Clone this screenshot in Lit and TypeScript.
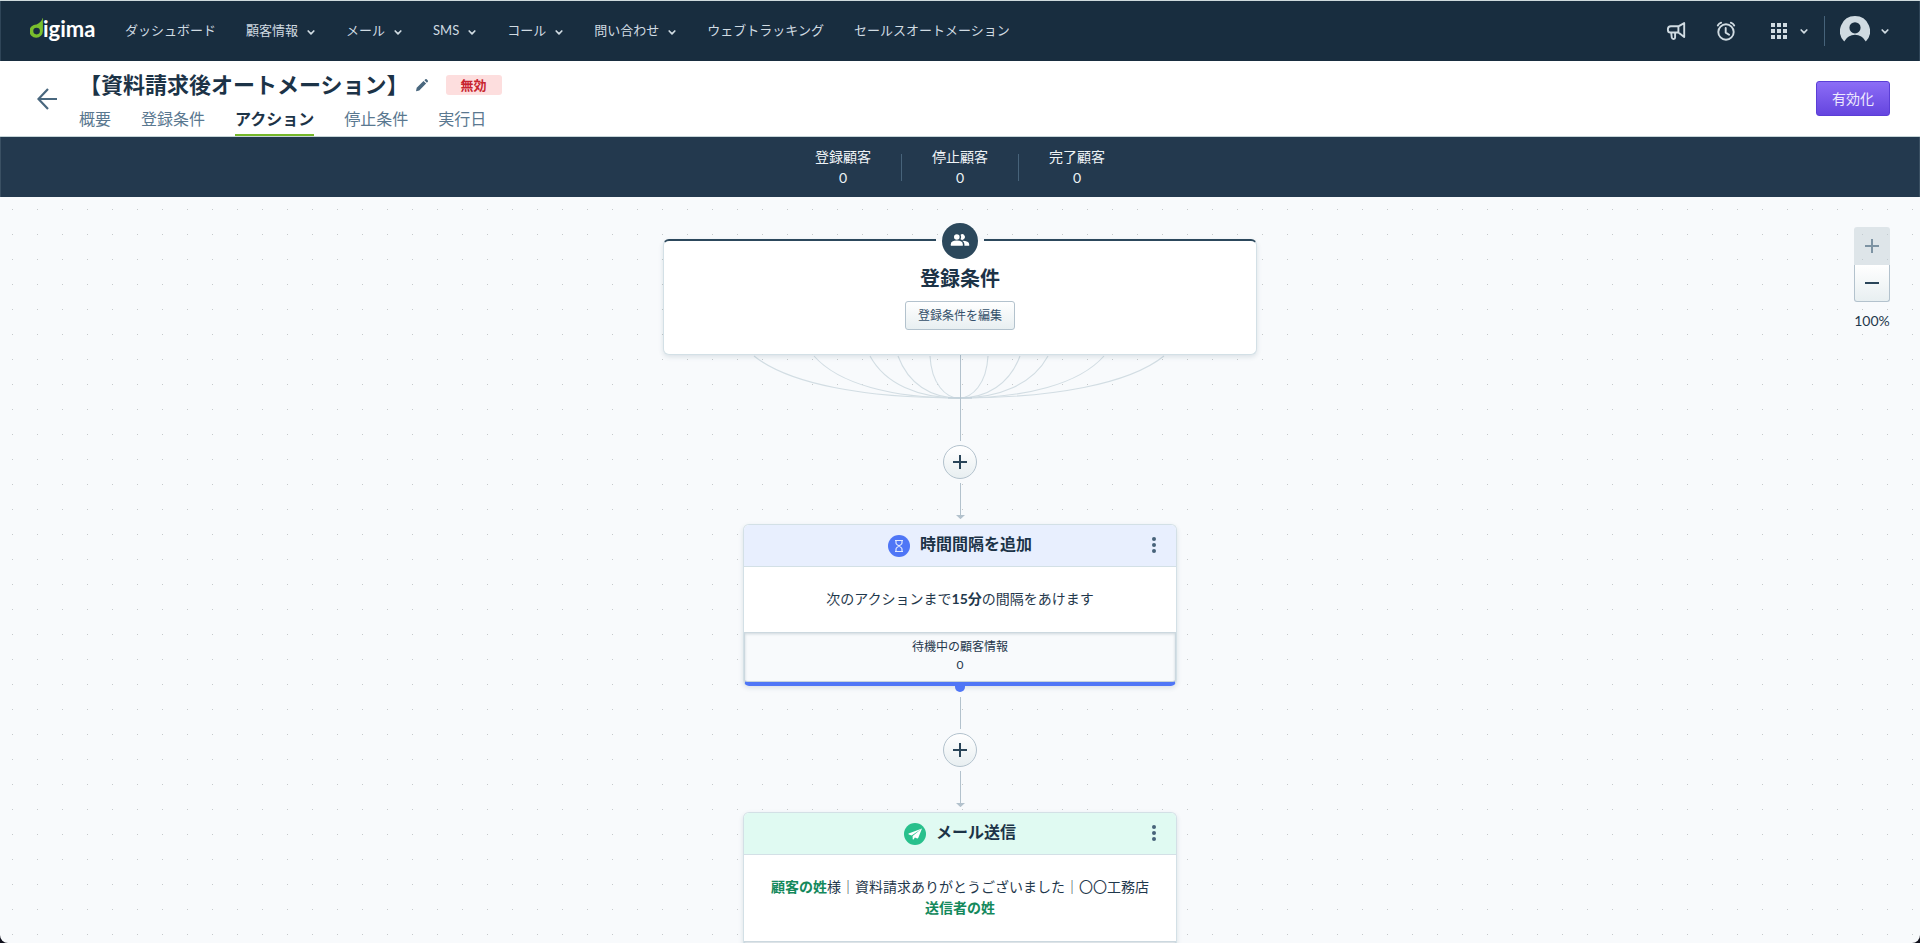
import { LitElement, html, svg, css, nothing } from "lit";
import { customElement, property } from "lit/decorators.js";

const chevron = html`<svg class="chevron" width="10" height="10" viewBox="0 0 10 10" fill="none" aria-hidden="true">
  <path d="M2.200 4L5 6.800 7.800 4" stroke="currentColor" stroke-width="1.7" stroke-linecap="round" stroke-linejoin="round" />
</svg>`;

const plus = html`<svg width="14" height="14" viewBox="0 0 14 14" aria-hidden="true">
  <path d="M0 6h14v2H0zM6 0h2v14H6z" fill="currentColor" />
</svg>`;

const base = css`
  * {
    box-sizing: border-box;
  }
  svg {
    display: block;
    flex: none;
  }
  button {
    font: inherit;
    color: inherit;
    margin: 0;
    padding: 0;
    border: 0;
    background: none;
    cursor: pointer;
  }
  a {
    color: inherit;
    text-decoration: none;
  }
`;

@customElement("top-nav")
class TopNav extends LitElement {
  static styles = [
    base,
    css`
      :host {
        display: block;
      }
      .bar {
        display: flex;
        align-items: center;
        height: 61px;
        padding: 0 30px;
        border-top: 1px solid #cfdadd;
        background: #182d3f;
        color: #d0dbe2;
        box-shadow: inset 1px 0 #2f4558, inset -1px 0 #2f4558;
      }
      .logo {
        margin-right: 27px;
      }
      .wordmark {
        font: bold 22px Lato, sans-serif;
        fill: #fff;
      }
      nav {
        display: flex;
        flex: 1;
        gap: 30px;
        font-size: 13px;
        line-height: 20px;
        white-space: nowrap;
        padding-bottom: 2px;
      }
      .item {
        display: flex;
        align-items: center;
        gap: 8px;
      }
      .item .chevron {
        margin-top: 4px;
      }
      .tools {
        display: flex;
        align-items: center;
        gap: 30px;
      }
      .menu {
        display: flex;
        align-items: center;
        gap: 10px;
      }
      .apps {
        margin-left: 3px;
      }
      .account {
        padding-left: 15px;
        margin-left: -15px;
        height: 30px;
        border-left: 1px solid #46637a;
      }
    `,
  ];

  private items: [string, boolean][] = [
    ["ダッシュボード", false],
    ["顧客情報", true],
    ["メール", true],
    ["SMS", true],
    ["コール", true],
    ["問い合わせ", true],
    ["ウェブトラッキング", false],
    ["セールスオートメーション", false],
  ];

  render() {
    return html`<header class="bar">
      <a class="logo" href="#" aria-label="digima">
        <svg width="68" height="30" viewBox="0 0 68 30">
          <path
            d="M12.6 2C12 5 9.6 7 6.6 8.4A6.7 6.7 0 1 0 12.9 15V2zM6.6 11.8a3.3 3.3 0 1 1 0 6.6 3.3 3.3 0 0 1 0-6.6z"
            fill="#79bf2d"
            fill-rule="evenodd"
          />
          <text class="wordmark" x="13" y="21">igima</text>
        </svg>
      </a>
      <nav>
        ${this.items.map(([label, menu]) =>
          menu
            ? html`<button class="item" type="button" aria-haspopup="true">${label}${chevron}</button>`
            : html`<a class="item" href="#">${label}</a>`
        )}
      </nav>
      <div class="tools">
        <button type="button" aria-label="お知らせ">
          <svg width="20" height="20" viewBox="0 0 20 20" fill="none" stroke="currentColor" stroke-width="1.9" stroke-linejoin="round">
            <path d="M12.4 5.3H4.9a3 3 0 0 0-3 3v.6a2.6 2.6 0 0 0 2.6 2.6h7.9zM12.4 5.3l5.8-3.2v14l-5.8-4.6M5.2 11.5l.6 5.1q.3 1.4 1.7 1.4h.2q1.4 0 1.4-1.4v-5" />
          </svg>
        </button>
        <button type="button" aria-label="アラーム">
          <svg width="20" height="20" viewBox="0 0 20 20" fill="none" stroke="currentColor" stroke-width="1.9" stroke-linecap="round" stroke-linejoin="round">
            <circle cx="10" cy="11" r="7.7" />
            <path d="M9.7 7v4.6l3.4 2.2M1.8 4.4q1.200-2 3.400-2.700M18.200 4.400q-1.200-2-3.400-2.700" />
          </svg>
        </button>
        <button class="menu apps" type="button" aria-label="アプリ">
          <svg width="20" height="20" viewBox="0 0 20 20" fill="currentColor">
            ${[2, 8, 14].map((y) => [2, 8, 14].map((x) => svg`<rect x=${x} y=${y} width="4" height="4" />`))}
          </svg>
          ${chevron}
        </button>
        <button class="menu account" type="button" aria-label="アカウント">
          <svg width="30" height="30" viewBox="0 0 30 30" fill="currentColor">
            <path
              d="M15 0a15 15 0 0 0-10.800 25.400Q8 18.800 15 18.800t10.800 6.600A15 15 0 0 0 15 0zM15 6.200a5.600 5.600 0 1 1 0 11.200 5.600 5.600 0 0 1 0-11.200z"
              fill-rule="evenodd"
            />
          </svg>
          ${chevron}
        </button>
      </div>
    </header>`;
  }
}

@customElement("page-head")
class PageHead extends LitElement {
  static styles = [
    base,
    css`
      :host {
        display: block;
      }
      .head {
        display: flex;
        align-items: center;
        height: 76px;
        padding: 0 30px;
        background: #fff;
        border-bottom: 1px solid #c6d5d8;
      }
      .back {
        padding: 0 7px;
        color: #49677e;
      }
      .main {
        flex: 1;
        align-self: stretch;
        display: flex;
        flex-direction: column;
        margin-left: 15px;
      }
      .title {
        display: flex;
        align-items: center;
        height: 46px;
        padding-top: 2px;
      }
      h1 {
        margin: 0 6px 0 0;
        font-size: 22px;
        line-height: 32px;
        font-weight: 700;
        color: #1c3347;
      }
      .edit {
        color: #49677e;
      }
      .badge {
        margin-left: 17px;
        padding: 0 15px;
        border-radius: 3px;
        background: #fddede;
        color: #c8252f;
        font-size: 13px;
        line-height: 20px;
        font-weight: 700;
      }
      .tabs {
        display: flex;
        gap: 30px;
        height: 30px;
        font-size: 16px;
        line-height: 26px;
        color: #5a7890;
      }
      .tab[aria-current] {
        font-weight: 700;
        color: #1c3347;
        border-bottom: 2px solid #76b82a;
      }
      .enable {
        height: 35px;
        padding: 0 15px 2px;
        border: 1px solid #5b3ed6;
        border-radius: 3px;
        background: linear-gradient(#8c6df6, #6545df);
        color: #eeeafd;
        font-size: 14px;
      }
    `,
  ];

  render() {
    return html`<section class="head">
      <button class="back" type="button" aria-label="戻る">
        <svg width="20" height="22" viewBox="0 0 20 22" fill="none" stroke="currentColor" stroke-width="2.200">
          <path d="M20 11H1.500M11 1L1.500 11l9.500 10" />
        </svg>
      </button>
      <div class="main">
        <div class="title">
          <h1>【資料請求後オートメーション】</h1>
          <button class="edit" type="button" aria-label="名前を編集">
            <svg width="14" height="14" viewBox="0 0 14 14" fill="currentColor">
              <path d="M1 13.200l.7-3.400 6.800-6.800 2.600 2.600-6.800 6.900zM9.400 2.200l.9-.9q.7-.6 1.400 0l1.100 1.100q.6.700 0 1.400l-.9.900z" />
            </svg>
          </button>
          <span class="badge">無効</span>
        </div>
        <nav class="tabs">
          <a class="tab" href="#">概要</a>
          <a class="tab" href="#">登録条件</a>
          <a class="tab" href="#" aria-current="page">アクション</a>
          <a class="tab" href="#">停止条件</a>
          <a class="tab" href="#">実行日</a>
        </nav>
      </div>
      <button class="enable" type="button">有効化</button>
    </section>`;
  }
}

@customElement("stats-bar")
class StatsBar extends LitElement {
  static styles = [
    base,
    css`
      :host {
        display: block;
      }
      .stats {
        display: flex;
        justify-content: center;
        align-items: center;
        height: 60px;
        margin: 0;
        background: #23394e;
        color: #eef3f6;
        font-size: 14px;
        line-height: 21px;
        text-align: center;
        box-shadow: inset 1px 0 #3a5063, inset -1px 0 #3a5063;
      }
      .rule {
        width: 1px;
        height: 27px;
        margin: 0 30px;
        background: #47637a;
      }
      dd {
        margin: 0;
      }
    `,
  ];

  render() {
    return html`<dl class="stats">
      ${["登録顧客", "停止顧客", "完了顧客"].map(
        (label, i) => html`${i ? html`<div class="rule"></div>` : nothing}
          <div><dt>${label}</dt><dd>0</dd></div>`
      )}
    </dl>`;
  }
}

@customElement("flow-link")
class FlowLink extends LitElement {
  @property({ type: Boolean }) first = false;

  static styles = [
    base,
    css`
      :host {
        display: flex;
        flex-direction: column;
        align-items: center;
        gap: 4px;
        padding-bottom: 5px;
        color: #b3c2cd;
      }
      :host(:not([first])) {
        padding-top: 11px;
      }
      .add {
        display: grid;
        place-items: center;
        width: 34px;
        height: 34px;
        border: 1px solid #b3c2cd;
        border-radius: 50%;
        background: linear-gradient(#fff, #e8eff1);
        color: #2a4559;
      }
    `,
  ];

  /* Half-widths of the curves that gather into the trunk line. */
  private spread = [205, 145, 89, 61, 29];

  private fan() {
    return html`<svg width="420" height="86" viewBox="0 0 420 86" fill="none" aria-hidden="true">
      ${this.spread.map((w) =>
        [-1, 1].map((side) => {
          const c1 = w > 40 ? 0.83 : 0.95;
          const x = (k: number) => 209 + side * w * k;
          return svg`<path d="M${x(1)} 1C${x(c1)} 29 ${x(0.46)} 43 209 43" stroke="#d2dde3" stroke-width="1.1" />`;
        })
      )}
      <path d="M198 43h24" stroke="#b9c9d4" />
      <path d="M210.500 0v86" stroke="currentColor" />
    </svg>`;
  }

  render() {
    return html`${this.first
        ? this.fan()
        : html`<svg width="10" height="32" viewBox="0 0 10 32"><path d="M5 0h1v32H5z" fill="currentColor" /></svg>`}
      <button class="add" type="button" aria-label="アクションを追加">${plus}</button>
      <svg width="10" height="36" viewBox="0 0 10 36"><path d="M5 0h1v32h4l-4.500 4.200L1 32h4z" fill="currentColor" /></svg>`;
  }
}

@customElement("action-card")
class ActionCard extends LitElement {
  @property() kind: "wait" | "mail" = "wait";
  @property() heading = "";

  static styles = [
    base,
    css`
      :host {
        display: block;
        width: 434px;
        max-width: 100%;
      }
      .card {
        position: relative;
        border: 1px solid #d3e0e6;
        border-bottom: 0;
        border-radius: 6px;
        background: #fff;
        box-shadow: 0 2px 5px rgba(40, 80, 100, 0.14);
      }
      .head {
        display: flex;
        align-items: center;
        justify-content: center;
        gap: 10px;
        height: 42px;
        border-bottom: 1px solid #d3e0e6;
        border-radius: 5px 5px 0 0;
      }
      .wait .head {
        background: #e8effe;
      }
      .mail .head {
        background: #e0faf2;
      }
      h2 {
        margin: 0;
        padding-bottom: 4px;
        font-size: 16px;
        line-height: 24px;
        color: #1c3347;
      }
      .more {
        position: absolute;
        top: 10px;
        right: 16px;
        color: #47637a;
      }
      .body {
        padding: 21px 24px 23px;
        font-size: 14px;
        line-height: 21px;
        text-align: center;
      }
      .foot {
        height: 54px;
        padding-top: 5px;
        border: 1px solid #ccd8df;
        border-bottom: 4px solid #4f76f6;
        border-radius: 0 0 5px 5px;
        background: #f8fafc;
        box-shadow: inset 0 1px 3px rgba(40, 80, 100, 0.2), inset 0 -1px #ccd8df;
        font-size: 12px;
        line-height: 18px;
        text-align: center;
      }
      .mail .foot {
        border-bottom-color: #28c08c;
      }
      .knob {
        position: absolute;
        top: 100%;
        left: 50%;
        width: 10px;
        height: 6px;
        margin-left: -5px;
        border-radius: 0 0 5px 5px;
        background: #4f76f6;
      }
      .mail .knob {
        background: #28c08c;
      }
    `,
  ];

  private icon() {
    return this.kind === "wait"
      ? html`<svg width="22" height="22" viewBox="0 0 22 22" fill="none" aria-hidden="true">
          <circle cx="11" cy="11" r="11" fill="#4f76f6" />
          <path
            d="M7 5.500h8M7 16.500h8M8 5.500v2.200q0 1 .8 1.700L11 11l2.200-1.600q.8-.7.8-1.700V5.500M8 16.500v-2.200q0-1 .8-1.700L11 11l2.200 1.600q.8.700.8 1.700v2.200"
            stroke="#dfe8ff"
            stroke-width="1.200"
          />
        </svg>`
      : html`<svg width="22" height="22" viewBox="0 0 22 22" aria-hidden="true">
          <circle cx="11" cy="11" r="11" fill="#28c08c" />
          <path d="M18 5.600L4.600 10.400q-.5.500.2 1l2.800 1zM18 5.600L8.600 13l.1 3.300q.6.500 1-.1l1.200-1.800 2.300 1q.8.100 1.100-.6z" fill="#fff" />
        </svg>`;
  }

  render() {
    return html`<article class="card ${this.kind}">
      <header class="head">${this.icon()}<h2>${this.heading}</h2></header>
      <button class="more" type="button" aria-label="メニュー">
        <svg width="12" height="20" viewBox="0 0 12 20" fill="currentColor">
          <circle cx="6" cy="4" r="2" />
          <circle cx="6" cy="10" r="2" />
          <circle cx="6" cy="16" r="2" />
        </svg>
      </button>
      <div class="body"><slot></slot></div>
      <div class="foot"><slot name="foot"></slot></div>
      <div class="knob"></div>
    </article>`;
  }
}

@customElement("app-root")
class AppRoot extends LitElement {
  static styles = [
    base,
    css`
      :host {
        display: flex;
        flex-direction: column;
        height: 100vh;
        overflow: hidden;
        background: #10101c;
        color: #1f384c;
        font-family: Lato, "Noto Sans CJK JP", sans-serif;
      }
      .canvas {
        position: relative;
        flex: 1;
        min-height: 0;
        overflow: hidden;
        display: flex;
        flex-direction: column;
        align-items: center;
        padding-top: 42px;
        border-radius: 0 0 8px 8px;
        background: radial-gradient(circle, #c5c9cb 4%, transparent 4%) 0 0 / 25px 25px #f8fafc;
      }
      .canvas > * {
        flex: none;
      }
      .entry {
        position: relative;
        display: flex;
        flex-direction: column;
        align-items: center;
        width: 594px;
        max-width: 100%;
        height: 116px;
        padding-top: 22px;
        border: 1px solid #d3e0e6;
        border-top: 2px solid #2c485c;
        border-radius: 6px;
        background: #fff;
        box-shadow: 0 2px 5px rgba(40, 80, 100, 0.14);
      }
      .people {
        position: absolute;
        top: -18px;
        left: 50%;
        width: 48px;
        margin-left: -24px;
        padding: 0 6px;
        background: linear-gradient(#f8fafc, #f8fafc) 0 16px / 100% 2px no-repeat;
      }
      h2 {
        margin: 0;
        font-size: 20px;
        line-height: 30px;
        color: #1c3347;
      }
      .edit {
        height: 29px;
        margin-top: 8px;
        padding: 0 12px 2px;
        border: 1px solid #b3c2cd;
        border-radius: 3px;
        background: linear-gradient(#fff, #e8eff1);
        color: #34506a;
        font-size: 12px;
      }
      .entity {
        color: #14895c;
      }
      .zoom {
        position: absolute;
        top: 30px;
        right: 30px;
        display: flex;
        flex-direction: column;
        align-items: center;
        width: 36px;
        font-size: 14px;
        line-height: 20px;
      }
      .step {
        display: grid;
        place-items: center;
        width: 36px;
        height: 37px;
        border: 1px solid #b3c2cd;
        border-top: 0;
        border-radius: 0 0 3px 3px;
        background: linear-gradient(#fff, #e8eff1);
        color: #2a4559;
      }
      .step:disabled {
        height: 38px;
        border: 0;
        border-radius: 3px 3px 0 0;
        background: rgba(190, 204, 211, 0.45);
        color: #7d93a3;
      }
      .level {
        margin-top: 9px;
      }
    `,
  ];

  render() {
    return html`
      <top-nav></top-nav>
      <page-head></page-head>
      <stats-bar></stats-bar>
      <main class="canvas">
        <section class="entry">
          <svg class="people" width="48" height="36" viewBox="0 0 36 36" aria-hidden="true">
            <circle cx="18" cy="18" r="18" fill="#2c485c" />
            <g fill="#fff">
              <circle cx="14.800" cy="14" r="2.800" />
              <path d="M8.800 22.800v-1.600q0-3.600 6-3.600t6 3.600v1.600z" />
              <path d="M18.600 11.700a2.800 2.800 0 1 1 0 4.600q1.200-2.300 0-4.600zM20.200 17.700q7 0 7 3.500v1.600h-4.800v-1.600q0-2.200-2.200-3.500z" />
            </g>
          </svg>
          <h2>登録条件</h2>
          <button class="edit" type="button">登録条件を編集</button>
        </section>
        <flow-link first></flow-link>
        <action-card kind="wait" heading="時間間隔を追加">
          次のアクションまで<b>15分</b>の間隔をあけます
          <div slot="foot">待機中の顧客情報<br />0</div>
        </action-card>
        <flow-link></flow-link>
        <action-card kind="mail" heading="メール送信">
          <b class="entity">顧客の姓</b>様｜資料請求ありがとうございました｜〇〇工務店
          <b class="entity">送信者の姓</b>
        </action-card>
        <div class="zoom">
          <button class="step" type="button" aria-label="拡大" disabled>${plus}</button>
          <button class="step" type="button" aria-label="縮小">
            <svg width="14" height="2" viewBox="0 0 14 2"><path d="M0 0h14v2H0z" fill="currentColor" /></svg>
          </button>
          <output class="level">100%</output>
        </div>
      </main>
    `;
  }
}
